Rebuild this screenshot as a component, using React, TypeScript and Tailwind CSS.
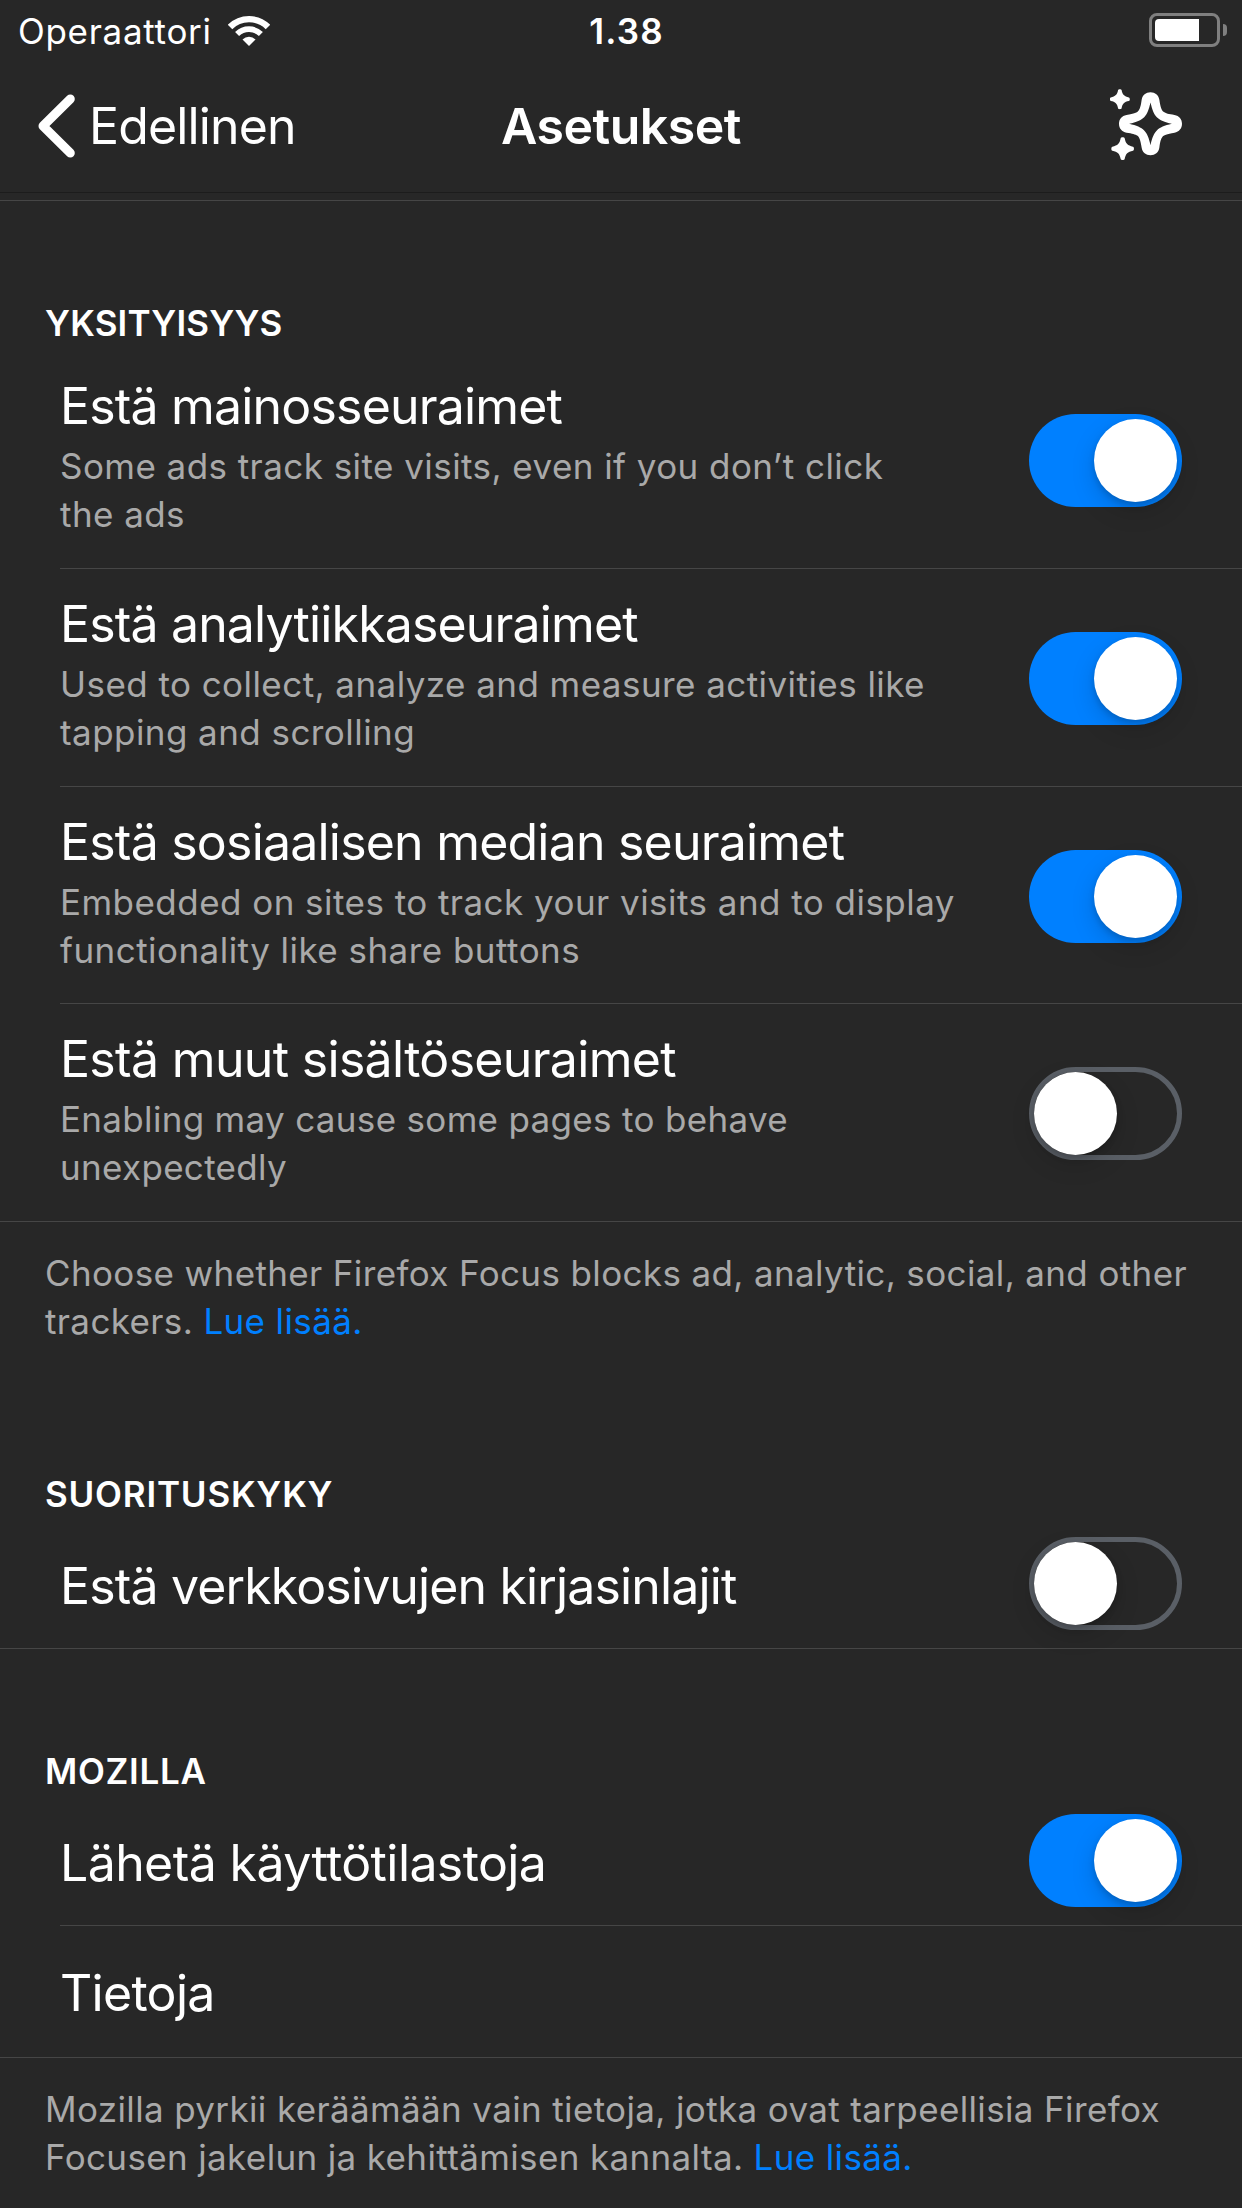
import type { ReactNode } from "react";

function Toggle({ on }: { on: boolean }) {
  return (
    <div
      className={
        on
          ? "flex h-[93px] w-[153px] shrink-0 items-center justify-end rounded-full bg-[#0080ff] px-[5px]"
          : "flex h-[93px] w-[153px] shrink-0 items-center rounded-full border-[5px] border-[#5a5f66]"
      }
    >
      <div className="size-[83px] rounded-full bg-white shadow-[0_9px_24px_rgba(0,0,0,0.15),0_3px_6px_rgba(0,0,0,0.16)]" />
    </div>
  );
}

function SectionTitle({ children, className }: { children: ReactNode; className: string }) {
  return <h2 className={`pl-[45px] text-[35px] leading-[48px] font-semibold ${className}`}>{children}</h2>;
}

function DetailRow({
  title,
  lines,
  on,
  className,
  titleClass,
  linesClass,
}: {
  title: string;
  lines: string[];
  on: boolean;
  className: string;
  titleClass: string;
  linesClass: string;
}) {
  return (
    <div className={`flex justify-between border-[#464646] pr-[60px] ${className}`}>
      <div className="whitespace-nowrap pt-[25px]">
        <div className={`text-[50px] leading-[60px] ${titleClass}`}>{title}</div>
        <div className={`mt-[6px] text-[35px] leading-[48px] text-[#a9a9a9] ${linesClass}`}>
          {lines.map((l) => (
            <div key={l}>{l}</div>
          ))}
        </div>
      </div>
      <div className="pt-[63px]">
        <Toggle on={on} />
      </div>
    </div>
  );
}

function SimpleRow({ title, on, className, titleClass }: { title: string; on?: boolean; className: string; titleClass: string }) {
  return (
    <div className={`flex items-center justify-between border-[#464646] pt-[1px] pr-[60px] ${className}`}>
      <div className={`whitespace-nowrap text-[50px] leading-[60px] ${titleClass}`}>{title}</div>
      {on !== undefined && <Toggle on={on} />}
    </div>
  );
}

function Wifi() {
  return (
    <svg className="ml-[16px] h-[30px] w-[42px]" viewBox="-63 -90 126 90" fill="none" stroke="#fff">
      <path d="M-56.9 -56.9A80.5 80.5 0 0 1 56.9 -56.9" strokeWidth="19" />
      <path d="M-35.7 -35.7A50.5 50.5 0 0 1 35.7 -35.7" strokeWidth="17" />
      <path d="M0 0L-19.5 -19.5A28 28 0 0 1 19.5 -19.5Z" fill="#fff" stroke="none" />
    </svg>
  );
}

function Battery() {
  return (
    <div className="flex items-center pb-[1px]">
      <div className="h-[34px] w-[71px] rounded-[8px] border-[3px] border-[#7f7f7f] p-[3px]">
        <div className="h-[22px] w-[44px] rounded-l-[4px] bg-white" />
      </div>
      <div className="ml-[3px] h-[12px] w-[4px] rounded-r-full bg-[#7f7f7f]" />
    </div>
  );
}

function Sparkles() {
  return (
    <svg className="mb-[3px] h-[72px] w-[73px]" viewBox="90 266 219 216" fill="#fff">
      <path
        transform="translate(211.5 370.5)"
        fillRule="evenodd"
        d="M0 -94.5C14 -94.5 24 -86 26.5 -72C30 -49 34 -39 39 -36C46 -31 54 -29 72 -26.5C86 -24 94.5 -14 94.5 0C94.5 14 86 24 72 26.5C49 30 39 34 36 39C31 46 29 54 26.5 72C24 86 14 94.5 0 94.5C-14 94.5 -24 86 -26.5 72C-30 49 -34 39 -39 36C-46 31 -54 29 -72 26.5C-86 24 -94.5 14 -94.5 0C-94.5 -14 -86 -24 -72 -26.5C-49 -30 -39 -34 -36 -39C-31 -46 -29 -54 -26.5 -72C-24 -86 -14 -94.5 0 -94.5ZM0 -64C-5 -42 -10 -29 -19 -20C-28 -11 -42 -5 -64 0C-42 5 -28 11 -19 20C-10 29 -5 42 0 64C5 42 10 29 19 20C28 11 42 5 64 0C42 -5 28 -11 19 -20C10 -29 5 -42 0 -64Z"
      />
      <path
        transform="translate(119.5 296.5) scale(0.88)"
        d="M-6 -31C-5 -35 5 -35 6 -31C9 -15 15 -9 31 -6C35 -5 35 5 31 6C15 9 9 15 6 31C5 35 -5 35 -6 31C-9 15 -15 9 -31 6C-35 5 -35 -5 -31 -6C-15 -9 -9 -15 -6 -31Z"
      />
      <path
        transform="translate(128 445)"
        d="M-6 -31C-5 -35 5 -35 6 -31C9 -15 15 -9 31 -6C35 -5 35 5 31 6C15 9 9 15 6 31C5 35 -5 35 -6 31C-9 15 -15 9 -31 6C-35 5 -35 -5 -31 -6C-15 -9 -9 -15 -6 -31Z"
      />
    </svg>
  );
}

export default function App() {
  return (
    <div className="h-[2208px] w-[1242px] overflow-hidden bg-[#272727] font-['Inter',sans-serif] text-white">
      <div className="grid h-[60px] grid-cols-[1fr_auto_1fr] items-center pt-[1px] text-[35px]">
        <div className="flex items-center pl-[18px]">
          <span className="leading-[48px] tracking-[0.7px]">Operaattori</span>
          <Wifi />
        </div>
        <span className="pl-[11px] leading-[48px] font-semibold tracking-[1.2px]">1.38</span>
        <div className="flex justify-end pr-[15px]">
          <Battery />
        </div>
      </div>
      <div className="grid h-[133px] grid-cols-[1fr_auto_1fr] items-center border-b border-[#1c1c1c] text-[50px] leading-[60px]">
        <div className="flex items-center pl-[38px]">
          <svg className="h-[64px] w-[38px]" viewBox="0 0 38 64" fill="none" stroke="#fff" strokeWidth="9" strokeLinecap="round" strokeLinejoin="round">
            <path d="M32.3 5L5 32L32.3 59" />
          </svg>
          <span className="pl-[13px] tracking-[-0.85px]">Edellinen</span>
        </div>
        <h1 className="font-semibold tracking-[-0.5px]">Asetukset</h1>
        <div className="flex justify-end pr-[59px]">
          <Sparkles />
        </div>
      </div>

      <div className="mt-[7px] border-t border-[#464646]" />
      <SectionTitle className="pt-[98px] tracking-[0.2px]">YKSITYISYYS</SectionTitle>
      <div className="pt-[4px]">
        <DetailRow className="ml-[60px] h-[218px] border-b" titleClass="tracking-[-0.82px]" title="Estä mainosseuraimet" lines={["Some ads track site visits, even if you don’t click", "the ads"]} linesClass="tracking-[0.44px]" on />
        <DetailRow className="ml-[60px] h-[218px] border-b" titleClass="tracking-[-0.85px]" title="Estä analytiikkaseuraimet" lines={["Used to collect, analyze and measure activities like", "tapping and scrolling"]} linesClass="tracking-[0.44px]" on />
        <DetailRow className="ml-[60px] h-[217px] border-b" titleClass="tracking-[-0.79px]" title="Estä sosiaalisen median seuraimet" lines={["Embedded on sites to track your visits and to display", "functionality like share buttons"]} linesClass="tracking-[0.46px]" on />
        <DetailRow className="h-[218px] border-b pl-[60px]" titleClass="tracking-[-0.68px]" title="Estä muut sisältöseuraimet" lines={["Enabling may cause some pages to behave", "unexpectedly"]} linesClass="tracking-[0.32px]" on={false} />
      </div>
      <div className="whitespace-nowrap pt-[27px] pl-[45px] text-[35px] leading-[48px] tracking-[0.37px] text-[#a9a9a9]">
        <div>Choose whether Firefox Focus blocks ad, analytic, social, and other</div>
        <div>
          trackers. <a className="text-[#0080ff]">Lue lisää.</a>
        </div>
      </div>

      <SectionTitle className="pt-[125px] tracking-[0.8px]">SUORITUSKYKY</SectionTitle>
      <SimpleRow className="h-[131px] border-b pl-[60px]" titleClass="pt-[5px] tracking-[-0.86px]" title="Estä verkkosivujen kirjasinlajit" on={false} />

      <SectionTitle className="pt-[98px] tracking-[0.7px]">MOZILLA</SectionTitle>
      <SimpleRow className="ml-[60px] h-[131px] border-b" titleClass="pt-[5px] tracking-[-0.6px]" title="Lähetä käyttötilastoja" on />
      <SimpleRow className="h-[132px] border-b pl-[60px]" titleClass="pt-[1px] tracking-[-0.7px]" title="Tietoja" />
      <div className="whitespace-nowrap pt-[27px] pl-[45px] text-[35px] leading-[48px] tracking-[0.36px] text-[#a9a9a9]">
        <div>Mozilla pyrkii keräämään vain tietoja, jotka ovat tarpeellisia Firefox</div>
        <div>
          Focusen jakelun ja kehittämisen kannalta. <a className="text-[#0080ff]">Lue lisää.</a>
        </div>
      </div>
    </div>
  );
}
